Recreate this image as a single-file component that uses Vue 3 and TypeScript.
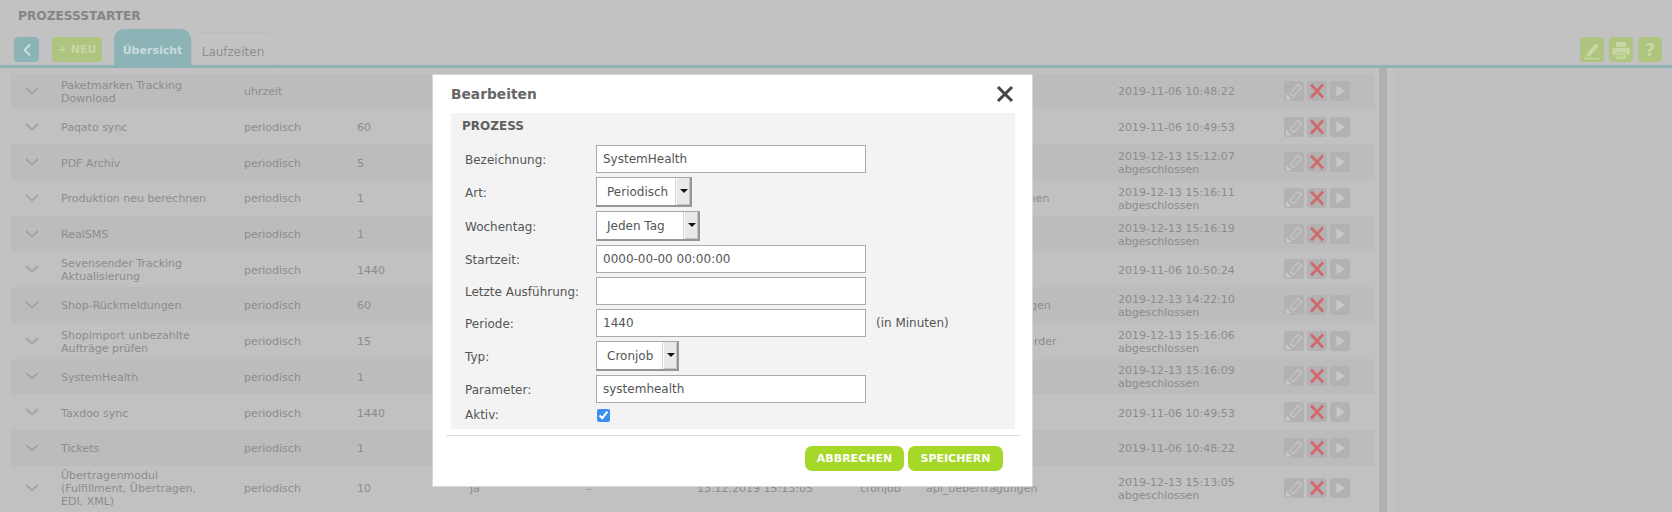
<script setup lang="ts">
interface Row {
  name: string
  art: string
  period: string
  last: string
  done: boolean
  param?: string
  active?: string
  dash?: string
  next?: string
  kind?: string
}

const rows: Row[] = [
  { name: 'Paketmarken Tracking Download', art: 'uhrzeit', period: '', last: '2019-11-06 10:48:22', done: false },
  { name: 'Paqato sync', art: 'periodisch', period: '60', last: '2019-11-06 10:49:53', done: false },
  { name: 'PDF Archiv', art: 'periodisch', period: '5', last: '2019-12-13 15:12:07', done: true },
  { name: 'Produktion neu berechnen', art: 'periodisch', period: '1', last: '2019-12-13 15:16:11', done: true, param: 'produktion_berechnen' },
  { name: 'RealSMS', art: 'periodisch', period: '1', last: '2019-12-13 15:16:19', done: true },
  { name: 'Sevensender Tracking Aktualisierung', art: 'periodisch', period: '1440', last: '2019-11-06 10:50:24', done: false },
  { name: 'Shop-Rückmeldungen', art: 'periodisch', period: '60', last: '2019-12-13 14:22:10', done: true, param: 'shop_rueckmeldungen' },
  { name: 'Shopimport unbezahlte Aufträge prüfen', art: 'periodisch', period: '15', last: '2019-12-13 15:16:06', done: true, param: 'shopimport_open_order' },
  { name: 'SystemHealth', art: 'periodisch', period: '1', last: '2019-12-13 15:16:09', done: true },
  { name: 'Taxdoo sync', art: 'periodisch', period: '1440', last: '2019-11-06 10:49:53', done: false },
  { name: 'Tickets', art: 'periodisch', period: '1', last: '2019-11-06 10:48:22', done: false },
  {
    name: 'Übertragenmodul (Fulfillment, Übertragen, EDI, XML)',
    art: 'periodisch',
    period: '10',
    active: 'ja',
    dash: '–',
    next: '13.12.2019 15:13:05',
    kind: 'cronjob',
    param: 'api_uebertragungen',
    last: '2019-12-13 15:13:05',
    done: true
  }
]
</script>

<template>
  <div class="page">
    <h1 class="title">PROZESSSTARTER</h1>
    <div class="toolbar">
      <button class="tool back" type="button">
        <svg width="10" height="14" viewBox="0 0 10 14"><path d="M8 1.500 2.500 7 8 12.500" fill="none" stroke="#cfe3e4" stroke-width="1.800" /></svg>
      </button>
      <button class="tool neu" type="button">+ NEU</button>
      <div class="tabs">
        <div class="tab on">Übersicht</div>
        <div class="tab">Laufzeiten</div>
      </div>
      <div class="tools-right">
        <button class="tool square" type="button">
          <svg width="20" height="20" viewBox="0 0 20 20">
            <path d="M5 13.500 13.500 3.500l3 2.500L8 16l-3.600 1z" fill="#c9d7a6" />
            <rect x="2" y="18" width="16" height="1.200" fill="#c9d7a6" />
          </svg>
        </button>
        <button class="tool square" type="button">
          <svg width="20" height="20" viewBox="0 0 20 20">
            <path d="M5 2h10v5H5zM2.500 8h15a1 1 0 0 1 1 1v6h-3v-2.500h-11V15h-3V9a1 1 0 0 1 1-1zM5.500 13.500h9V19h-9z" fill="#c9d7a6" />
            <path d="M7 15.500h6M7 17.200h6" stroke="#afc57f" stroke-width="1" />
          </svg>
        </button>
        <button class="tool square help" type="button">?</button>
      </div>
    </div>
    <div class="rule"></div>

    <div class="main">
      <div class="table">
        <div v-for="(row, i) in rows" :key="row.name" class="row" :class="{ odd: i % 2 === 0, tall: i === rows.length - 1 }">
          <svg class="chev" width="14" height="8" viewBox="0 0 14 8"><path d="M1 1l6 5.500L13 1" fill="none" stroke="#a3a3a3" stroke-width="1.700" /></svg>
          <div class="name">{{ row.name }}</div>
          <div class="art">{{ row.art }}</div>
          <div class="period">{{ row.period }}</div>
          <div class="active">{{ row.active }}</div>
          <div class="dash">{{ row.dash }}</div>
          <div class="next">{{ row.next }}</div>
          <div class="kind">{{ row.kind }}</div>
          <div class="param">{{ row.param }}</div>
          <div class="last">
            <div>{{ row.last }}</div>
            <div v-if="row.done">abgeschlossen</div>
          </div>
          <div class="actions">
            <span class="act">
              <svg width="20" height="20" viewBox="0 0 20 20">
                <path d="M6 12.500 14 3.500l3.500 3-8 9z" fill="none" stroke="#c9c9c9" stroke-width="1.100" />
                <path d="M2 18.500V13l5.500 5.500z" fill="#c9c9c9" />
              </svg>
            </span>
            <span class="act">
              <svg width="20" height="20" viewBox="0 0 20 20"><path d="M4 3.500 16 16.500M16 3.500 4 16.500" stroke="#d2686a" stroke-width="2.600" /></svg>
            </span>
            <span class="act">
              <svg width="20" height="20" viewBox="0 0 20 20"><path d="M6.500 4.500 15 10l-8.500 5.500z" fill="#c9c9c9" /></svg>
            </span>
          </div>
        </div>
      </div>
      <div class="track"><div class="thumb"></div></div>
      <div class="side"></div>
    </div>

    <div class="modal">
      <div class="modal-head">
        <h2>Bearbeiten</h2>
        <svg width="18" height="18" viewBox="0 0 18 18"><path d="M2 2l14 14M16 2 2 16" stroke="#444" stroke-width="3" /></svg>
      </div>
      <section class="box">
        <h3>PROZESS</h3>
        <div class="form">
          <label>Bezeichnung:</label>
          <div class="field">SystemHealth</div>
          <label>Art:</label>
          <div class="select s1">Periodisch<span class="arrow"></span></div>
          <label>Wochentag:</label>
          <div class="select s2">Jeden Tag<span class="arrow"></span></div>
          <label>Startzeit:</label>
          <div class="field">0000-00-00 00:00:00</div>
          <label>Letzte Ausführung:</label>
          <div class="field"></div>
          <label>Periode:</label>
          <div class="with-note">
            <div class="field">1440</div>
            <span>(in Minuten)</span>
          </div>
          <label>Typ:</label>
          <div class="select s3">Cronjob<span class="arrow"></span></div>
          <label>Parameter:</label>
          <div class="field">systemhealth</div>
          <label class="aktiv">Aktiv:</label>
          <div class="check"><input type="checkbox" checked /></div>
        </div>
      </section>
      <hr />
      <div class="buttons">
        <button class="go b1" type="button">ABBRECHEN</button>
        <button class="go b2" type="button">SPEICHERN</button>
      </div>
    </div>
  </div>
</template>

<style scoped>
.page {
  position: relative;
  height: 512px;
  overflow: hidden;
  background: #c2c2c2;
  font-family: "DejaVu Sans", Verdana, sans-serif;
  font-size: 11px;
  color: #8c8c8c;
}
.title {
  margin: 0;
  padding: 9px 0 0 18px;
  height: 29px;
  box-sizing: border-box;
  font-size: 12.200px;
  line-height: 15px;
  font-weight: 700;
  color: #858585;
}
.toolbar {
  display: flex;
  align-items: flex-start;
  height: 36px;
  padding: 0 10px 0 14px;
}
.tool {
  margin: 8px 0 0;
  height: 25px;
  padding: 0;
  border: 0;
  border-radius: 4px;
  display: flex;
  align-items: center;
  justify-content: center;
  font-family: inherit;
}
.back {
  width: 25px;
  background: #8cb3b5;
}
.neu {
  width: 50px;
  margin-left: 13px;
  background: #afc57f;
  color: #c9d7a6;
  font-size: 11px;
  font-weight: 700;
}
.tabs {
  display: flex;
  align-items: flex-end;
  height: 36px;
  margin-left: 12px;
}
.tab {
  box-sizing: border-box;
  width: 84px;
  height: 33px;
  padding-top: 11px;
  text-align: center;
  border: 1px solid #bcbcbc;
  border-bottom: 0;
  border-radius: 10px 10px 0 0;
  font-size: 12px;
  line-height: 16px;
  color: #8e8e8e;
}
.tab.on {
  width: 77px;
  height: 36px;
  padding-top: 14px;
  background: #8cb3b5;
  border: 0;
  font-size: 11px;
  font-weight: 700;
  color: #c9dcdd;
}
.tools-right {
  display: flex;
  gap: 5px;
  margin-left: auto;
}
.square {
  width: 24px;
  background: #afc57f;
}
.help {
  color: #c9d7a6;
  font-size: 18px;
  font-weight: 700;
}
.rule {
  height: 3px;
  background: #8cb3b5;
}
.main {
  display: flex;
  height: 444px;
}
.table {
  width: 1364px;
  margin: 5px 0 0 11px;
  flex: none;
}
.row {
  display: grid;
  grid-template-columns: 50px 183px 113px 113px 116px 111px 163px 66px 192px 166px 1fr;
  align-items: center;
  box-sizing: border-box;
  height: 35.700px;
  background: #c1c1c1;
  line-height: 13px;
}
.row.odd {
  background: #bcbcbc;
}
.row.tall {
  height: 44.300px;
}
.name,
.art,
.period,
.active,
.dash,
.next,
.kind,
.param,
.last {
  padding-top: 2px;
}
.chev {
  margin-left: 14px;
}
.name {
  width: 150px;
}
.param {
  white-space: nowrap;
}
.last {
  white-space: nowrap;
}
.actions {
  display: flex;
  gap: 3px;
}
.act {
  display: block;
  width: 20px;
  height: 20px;
  border-radius: 3px;
  background: #b2b2b2;
}
.act svg {
  display: block;
}
.track {
  flex: none;
  width: 20px;
  padding-left: 4px;
  box-sizing: border-box;
  background: #c2c2c2;
}
.thumb {
  width: 8px;
  height: 100%;
  background: #b0b0b0;
}
.side {
  flex: 1;
  background: #bfbfbf;
}
.modal {
  position: absolute;
  left: 433px;
  top: 75px;
  width: 599px;
  height: 411px;
  box-sizing: border-box;
  padding: 0 17px 0 18px;
  background: #fff;
  outline: 1px solid #d8d8d8;
  color: #555;
  font-size: 12px;
}
.modal-head {
  display: flex;
  align-items: center;
  justify-content: space-between;
  height: 38px;
  padding-right: 1px;
}
.modal-head h2 {
  margin: 0;
  font-size: 13.800px;
  font-weight: 700;
  color: #666;
}
.box {
  height: 316px;
  box-sizing: border-box;
  background: #f3f3f3;
  padding: 0 0 0 11px;
}
.box h3 {
  margin: 0;
  height: 32px;
  line-height: 26px;
  font-size: 12px;
  font-weight: 700;
  color: #5f5f5f;
}
.form {
  display: grid;
  grid-template-columns: 131px 1fr;
  align-items: center;
  row-gap: 4px;
  padding-left: 3px;
}
.form label {
  padding-top: 2px;
}
.field {
  box-sizing: border-box;
  width: 270px;
  height: 28px;
  padding: 0 6px;
  line-height: 27px;
  background: #fff;
  border: 1px solid #aaa;
}
.with-note {
  display: flex;
  align-items: center;
  gap: 10px;
}
.select {
  position: relative;
  box-sizing: border-box;
  height: 30px;
  padding-left: 10px;
  line-height: 28px;
  background: #fff;
  border: 1px solid #a8a8a8;
  border-right-width: 2px;
  border-bottom-width: 2px;
  border-right-color: #969696;
  border-bottom-color: #969696;
}
.s1 {
  width: 96px;
}
.s2 {
  width: 104px;
}
.s3 {
  width: 83px;
}
.arrow {
  position: absolute;
  right: 0;
  top: 0;
  bottom: 0;
  width: 13px;
  background: #e9e9e9;
  border-left: 1px solid #fff;
  box-shadow: inset -1px -1px 0 #c4c4c4, -1px 0 0 #d4d4d4;
}
.arrow::after {
  content: "";
  position: absolute;
  left: 3px;
  top: 11px;
  border: 4px solid transparent;
  border-top: 4px solid #111;
  border-bottom: 0;
}
.check {
  height: 16px;
  display: flex;
  align-items: center;
}
.check input {
  margin: 0 0 0 1px;
  width: 13px;
  height: 13px;
  accent-color: #3b8ef5;
}
.form .aktiv {
  padding-top: 0;
  line-height: 14px;
}
hr {
  margin: 6px -5px 0;
  border: 0;
  height: 1px;
  background: #dcdcdc;
}
.buttons {
  display: flex;
  justify-content: flex-end;
  gap: 4px;
  padding: 10px 12px 0 0;
}
.go {
  height: 25px;
  padding: 0;
  border: 0;
  border-radius: 7px;
  background: #a5d827;
  color: #fff;
  font-family: inherit;
  font-size: 11px;
  font-weight: 700;
}
.b1 {
  width: 99px;
}
.b2 {
  width: 95px;
}
</style>

<style>
html,
body {
  margin: 0;
  background: #c2c2c2;
}
</style>
